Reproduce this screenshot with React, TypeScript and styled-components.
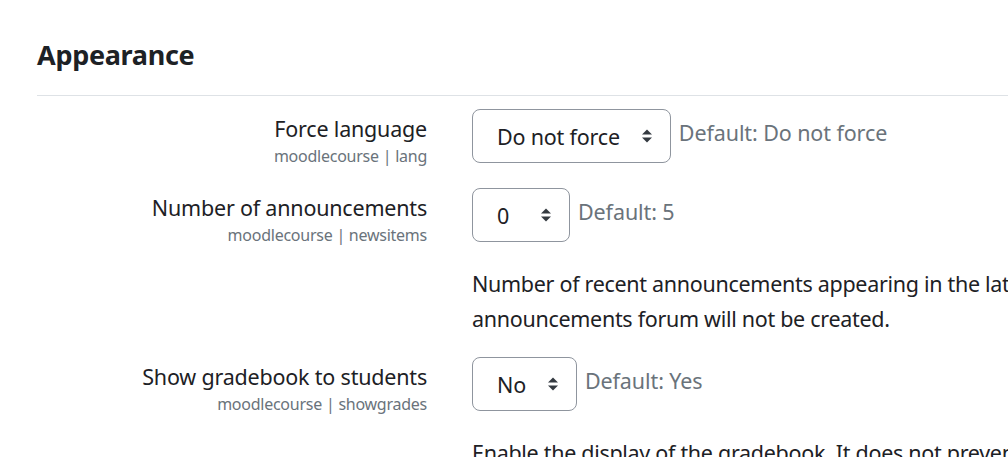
import * as React from "react";
import styled, { createGlobalStyle } from "styled-components";

const Global = createGlobalStyle`
  html, body {
    margin: 0;
    padding: 0;
    background: #fff;
    overflow: hidden;
  }
  body {
    font-family: "Noto Sans", "Open Sans", sans-serif;
    color: #1d2125;
  }
`;

type Setting = {
  label: string;
  name: string;
  value: string;
  def: string;
  desc?: string[];
};

const settings: Setting[] = [
  {
    label: "Force language",
    name: "lang",
    value: "Do not force",
    def: "Do not force",
  },
  {
    label: "Number of announcements",
    name: "newsitems",
    value: "0",
    def: "5",
    desc: [
      "Number of recent announcements appearing in the latest announcements block on the course page. If this is set to zero, the",
      "announcements forum will not be created.",
    ],
  },
  {
    label: "Show gradebook to students",
    name: "showgrades",
    value: "No",
    def: "Yes",
    desc: [
      "Enable the display of the gradebook. It does not prevent grades from being displayed within the individual activities.",
    ],
  },
];

export default function App() {
  return (
    <>
      <Global />
      <Page>
        <Heading>Appearance</Heading>
        <Divider />
        {settings.map((s) => (
          <Row key={s.name}>
            <LabelCol>
              <Label>{s.label}</Label>
              <Key>moodlecourse | {s.name}</Key>
            </LabelCol>
            <Control>
              <SelectLine>
                <Select>
                  <span>{s.value}</span>
                  <Arrows />
                </Select>
                <Default>Default: {s.def}</Default>
              </SelectLine>
              {s.desc && (
                <Desc>
                  {s.desc.map((l) => (
                    <div key={l}>{l}</div>
                  ))}
                </Desc>
              )}
            </Control>
          </Row>
        ))}
      </Page>
    </>
  );
}

function Arrows() {
  return (
    <svg width="12" height="16" viewBox="0 0 12 16">
      <path d="M1 6.5 L6 1.5 L11 6.5 Z" fill="#343a40" />
      <path d="M1 9.5 L6 14.5 L11 9.5 Z" fill="#343a40" />
    </svg>
  );
}

const Page = styled.div`
  padding: 32px 0 0 37px;
  width: 1500px;
`;

const Heading = styled.h3`
  margin: 0;
  font-size: 27px;
  font-weight: 700;
  line-height: 46px;
  letter-spacing: -0.3px;
`;

const Divider = styled.hr`
  border: 0;
  border-top: 1px solid #dee2e6;
  margin: 17px 0 13px;
`;

const Row = styled.div`
  display: flex;
  gap: 45px;
  margin-bottom: 21px;
`;

const LabelCol = styled.div`
  flex: 0 0 390px;
  text-align: right;
  padding-top: 4px;
`;

const Label = styled.div`
  font-size: 21.5px;
  line-height: 32px;
  letter-spacing: -0.2px;
`;

const Key = styled.div`
  font-size: 16px;
  line-height: 22px;
  color: #6a737b;
  letter-spacing: -0.25px;
`;

const Control = styled.div`
  display: flex;
  flex-direction: column;
`;

const SelectLine = styled.div`
  display: flex;
  align-items: flex-start;
  gap: 8px;
`;

const Select = styled.div`
  height: 54px;
  min-width: 98px;
  box-sizing: border-box;
  border: 1px solid #8f959e;
  border-radius: 8px;
  display: flex;
  align-items: center;
  justify-content: space-between;
  gap: 21px;
  padding: 0 17px 0 24px;
  font-size: 21.5px;
  letter-spacing: -0.2px;

  span {
    padding-top: 1px;
  }
`;

const Default = styled.div`
  font-size: 21.5px;
  line-height: 48px;
  color: #6a737b;
  letter-spacing: -0.1px;
`;

const Desc = styled.div`
  margin-top: 24px;
  font-size: 21.5px;
  line-height: 35px;
  letter-spacing: -0.3px;
  white-space: nowrap;
`;
